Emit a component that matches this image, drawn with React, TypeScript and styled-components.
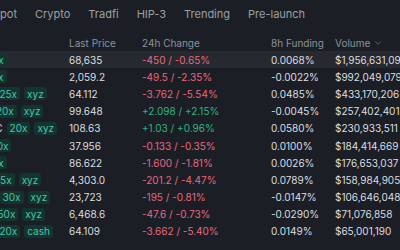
import * as React from 'react';
import styled, { createGlobalStyle } from 'styled-components';
import { ChevronDown } from 'lucide-react';

type Market = {
  name: string;
  lev: string;
  dex?: string;
  price: string;
  change: string;
  funding: string;
  volume: string;
};

const markets: Market[] = [
  { name: 'BTC', lev: '40x', price: '68,635', change: '-450 / -0.65%', funding: '0.0068%', volume: '$1,956,631,094' },
  { name: 'ETH', lev: '25x', price: '2,059.2', change: '-49.5 / -2.35%', funding: '-0.0022%', volume: '$992,049,079' },
  { name: 'SILVER', lev: '25x', dex: 'xyz', price: '64.112', change: '-3.762 / -5.54%', funding: '0.0485%', volume: '$433,170,206' },
  { name: 'HOOD', lev: '20x', dex: 'xyz', price: '99.648', change: '+2.098 / +2.15%', funding: '-0.0045%', volume: '$257,402,401' },
  { name: 'SAMSNC', lev: '20x', dex: 'xyz', price: '108.63', change: '+1.03 / +0.96%', funding: '0.0580%', volume: '$230,933,511' },
  { name: 'HYPE', lev: '10x', price: '37.956', change: '-0.133 / -0.35%', funding: '0.0100%', volume: '$184,414,669' },
  { name: 'SOL', lev: '20x', price: '86.622', change: '-1.600 / -1.81%', funding: '0.0026%', volume: '$176,653,037' },
  { name: 'GOLD', lev: '25x', dex: 'xyz', price: '4,303.0', change: '-201.2 / -4.47%', funding: '0.0789%', volume: '$158,984,905' },
  { name: 'XYZ100', lev: '30x', dex: 'xyz', price: '23,723', change: '-195 / -0.81%', funding: '-0.0147%', volume: '$106,646,048' },
  { name: 'SP500', lev: '50x', dex: 'xyz', price: '6,468.6', change: '-47.6 / -0.73%', funding: '-0.0290%', volume: '$71,076,858' },
  { name: 'SILVER', lev: '20x', dex: 'cash', price: '64.109', change: '-3.662 / -5.40%', funding: '0.0149%', volume: '$65,001,190' },
];

const tabs = ['Spot', 'Crypto', 'Tradfi', 'HIP-3', 'Trending', 'Pre-launch'];

const GlobalStyle = createGlobalStyle`
  body {
    margin: 0;
    background: #1b1f25;
    font-family: Inter, "Noto Sans", sans-serif;
  }
`;

const Page = styled.div`
  width: 400px;
  height: 250px;
  overflow: hidden;
  background: #1b1f25;
`;

const TabBar = styled.div`
  display: flex;
  align-items: center;
  height: 28px;
  margin-left: -16px;
`;

const Tab = styled.div`
  padding: 0 9px;
  font-size: 11px;
  color: #9aa0a6;
  white-space: nowrap;
`;

const Table = styled.div`
  margin-left: -41px;
  padding-top: 7px;
`;

const Row = styled.div<{ $active?: boolean }>`
  display: grid;
  grid-template-columns: 110px 73px 129px 64px 1fr;
  align-items: center;
  height: 17.2px;
  background: ${(p) => (p.$active ? '#262a30' : 'transparent')};
  font-size: 10px;
  color: #dcdee0;
  white-space: nowrap;
`;

const HeadRow = styled(Row)`
  height: 16px;
  color: #8d9299;
`;

const Symbol = styled.div`
  display: flex;
  align-items: center;
  gap: 4px;
`;

const Badge = styled.span`
  display: inline-flex;
  align-items: center;
  height: 13px;
  padding: 0 3px;
  border-radius: 3px;
  background: #13352f;
  color: #4cc4aa;
  font-size: 10px;
`;

const Change = styled.div<{ $up: boolean }>`
  color: ${(p) => (p.$up ? '#2fb386' : '#e8687f')};
`;

const SortHead = styled.div`
  display: flex;
  align-items: center;
  gap: 3px;
`;

export default function App() {
  return (
    <Page>
      <GlobalStyle />
      <TabBar>
        {tabs.map((t) => (
          <Tab key={t}>{t}</Tab>
        ))}
      </TabBar>
      <Table>
        <HeadRow>
          <div>Symbol</div>
          <div>Last Price</div>
          <div>24h Change</div>
          <div>8h Funding</div>
          <SortHead>
            Volume <ChevronDown size={10} strokeWidth={1.5} />
          </SortHead>
        </HeadRow>
        {markets.map((m, i) => (
          <Row key={m.name + m.lev + i} $active={i === 0}>
            <Symbol>
              <span>{m.name}</span>
              <Badge>{m.lev}</Badge>
              {m.dex && <Badge>{m.dex}</Badge>}
            </Symbol>
            <div>{m.price}</div>
            <Change $up={m.change.startsWith('+')}>{m.change}</Change>
            <div>{m.funding}</div>
            <div>{m.volume}</div>
          </Row>
        ))}
      </Table>
    </Page>
  );
}
